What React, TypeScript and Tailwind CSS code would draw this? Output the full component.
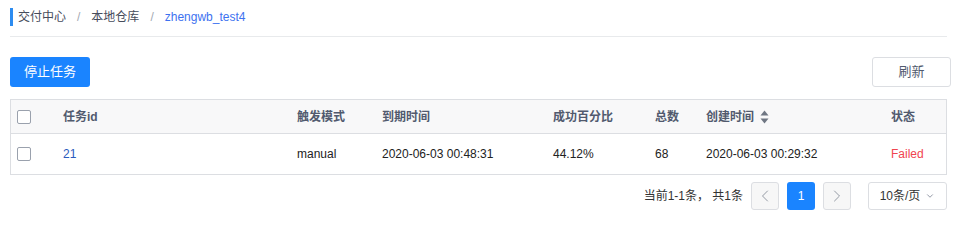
import { ChevronLeft, ChevronRight, ChevronDown } from 'lucide-react';

const cols = 'grid grid-cols-[46px_234px_85px_171px_102px_51px_185px_1fr]';

function Checkbox() {
  return <span className="block w-[14px] h-[14px] rounded-[2px] border border-[#9aa1ad] bg-white" />;
}

function SortIcon() {
  return (
    <svg width="9" height="14" viewBox="0 0 9 14" className="ml-[6px]">
      <path d="M4.5 0.5 L8.5 5.5 L0.5 5.5 Z" fill="#6f7683" />
      <path d="M4.5 13.5 L8.5 8.5 L0.5 8.5 Z" fill="#6f7683" />
    </svg>
  );
}

export default function App() {
  const row = {
    id: '21',
    mode: 'manual',
    expire: '2020-06-03 00:48:31',
    rate: '44.12%',
    total: '68',
    created: '2020-06-03 00:29:32',
    status: 'Failed',
  };

  return (
    <div className="w-[956px] h-[251px] bg-white pl-[10px] pr-[9px] text-[12px] text-[#515a6e] font-['Liberation_Sans','Noto_Sans_CJK_SC',sans-serif]">
      {/* breadcrumb */}
      <div className="pt-[8px] pb-[10px] border-b border-[#e8eaec]">
        <div className="h-[18px] flex items-center border-l-[3px] border-[#2d8cf0] pl-[5px]">
          <span className="text-[#464c5b]">交付中心</span>
          <span className="px-[11px] text-[#a4a9b3]">/</span>
          <span className="text-[#464c5b]">本地仓库</span>
          <span className="px-[11px] text-[#a4a9b3]">/</span>
          <span className="text-[#3d72f0]">zhengwb_test4</span>
        </div>
      </div>

      {/* actions */}
      <div className="mt-[20px] flex items-center justify-between">
        <button className="w-[80px] h-[30px] rounded-[3px] bg-[#1a84ff] text-white text-[13px]">停止任务</button>
        <button className="w-[79px] h-[30px] -mr-[4px] rounded-[3px] border border-[#dcdee2] bg-white text-[#515a6e] text-[13px]">刷新</button>
      </div>

      {/* table */}
      <div className="mt-[12px] border border-[#dcdee2]">
        <div className={`${cols} h-[34px] bg-[#f8f8f9] border-b border-[#dcdee2] items-center font-bold text-[#515a6e]`}>
          <div className="pl-[6px]"><Checkbox /></div>
          <div className="pl-[6px]">任务id</div>
          <div className="pl-[6px]">触发模式</div>
          <div className="pl-[6px]">到期时间</div>
          <div className="pl-[6px]">成功百分比</div>
          <div className="pl-[6px]">总数</div>
          <div className="pl-[6px] flex items-center">创建时间<SortIcon /></div>
          <div className="pl-[6px]">状态</div>
        </div>
        <div className={`${cols} h-[40px] items-center text-[#222]`}>
          <div className="pl-[6px]"><Checkbox /></div>
          <div className="pl-[6px] text-[#2b5bbd]">{row.id}</div>
          <div className="pl-[6px]">{row.mode}</div>
          <div className="pl-[6px]">{row.expire}</div>
          <div className="pl-[6px]">{row.rate}</div>
          <div className="pl-[6px]">{row.total}</div>
          <div className="pl-[6px]">{row.created}</div>
          <div className="pl-[6px] text-[#f0454f]">{row.status}</div>
        </div>
      </div>

      {/* pagination */}
      <div className="mt-[7px] h-[28px] flex items-center justify-end">
        <span className="mr-[8px] text-[#333]">当前1-1条， 共1条</span>
        <button className="w-[28px] h-[28px] flex items-center justify-center rounded-[3px] border border-[#dcdee2] bg-[#f7f7f7] text-[#8a909b]">
          <ChevronLeft className="w-[20px] h-[20px]" strokeWidth={1.1} />
        </button>
        <button className="ml-[8px] w-[28px] h-[28px] flex items-center justify-center rounded-[3px] bg-[#1a84ff] text-white">1</button>
        <button className="ml-[8px] w-[28px] h-[28px] flex items-center justify-center rounded-[3px] border border-[#dcdee2] bg-[#f7f7f7] text-[#8a909b]">
          <ChevronRight className="w-[20px] h-[20px]" strokeWidth={1.1} />
        </button>
        <button className="ml-[17px] w-[79px] h-[28px] flex items-center justify-center gap-[5px] rounded-[3px] border border-[#dcdee2] bg-white text-[#333]">
          10条/页
          <ChevronDown className="w-[10px] h-[10px] text-[#808695]" strokeWidth={2} />
        </button>
      </div>
    </div>
  );
}
